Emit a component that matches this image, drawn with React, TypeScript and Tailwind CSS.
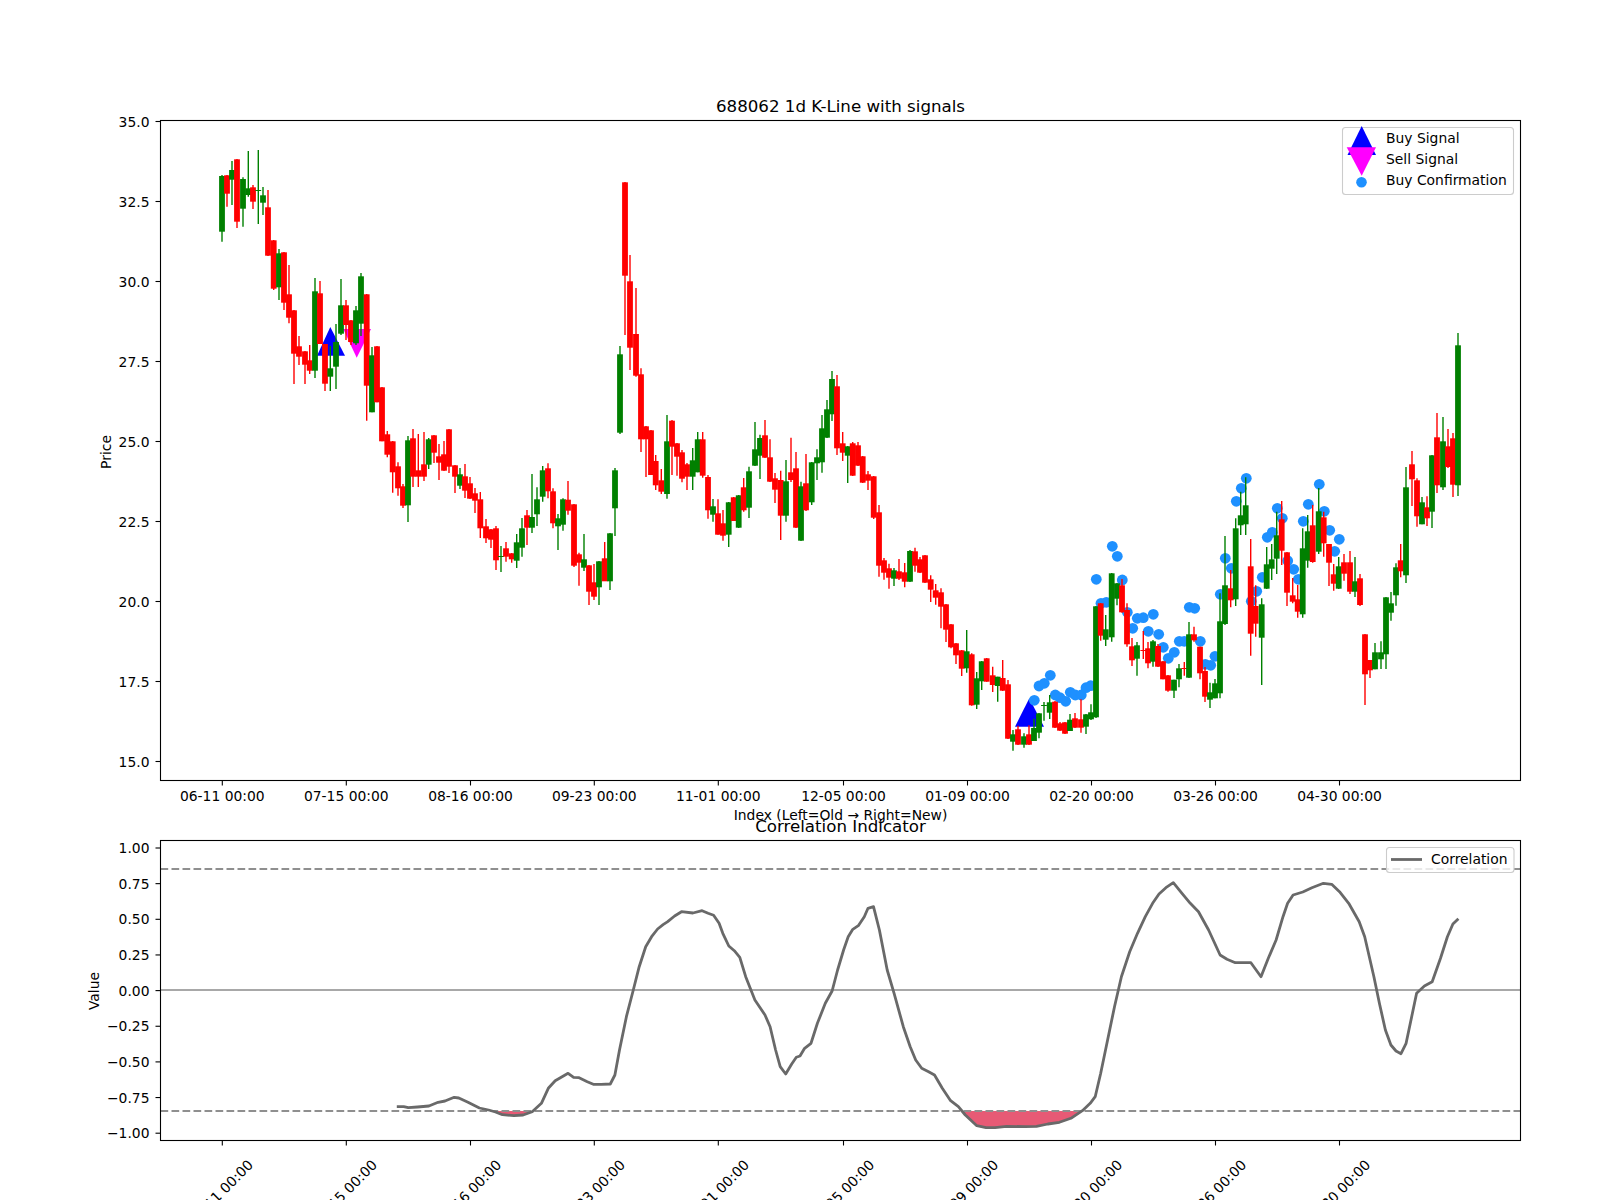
import React from 'react';

type Candle = [number, number, number, number, number, 'r' | 'g'];

// x, body top, body bottom, wick top, wick bottom (page pixels)
const CANDLES: Candle[] = [
  [222, 176, 231.7, 175, 241.7, 'g'], [227, 175.3, 193.7, 175, 206.7, 'r'], [232, 170, 179.7, 161, 205, 'g'],
  [237, 159.3, 221.7, 159, 228, 'r'], [243, 179, 208.7, 177.3, 226.7, 'g'], [248.3, 188.3, 195, 151, 196.7, 'g'],
  [253, 187.3, 201.7, 185, 209, 'r'], [258.3, 190, 191, 150, 224, 'g'], [263, 195.3, 202.7, 187, 215, 'g'],
  [268, 207.3, 255.7, 190, 256, 'r'], [273.7, 240.3, 288.7, 240, 290, 'r'], [279, 253.3, 287.3, 249, 300, 'g'],
  [284, 252.3, 302.7, 252, 310, 'r'], [289, 294.3, 317.7, 265, 323.3, 'r'], [294, 310.3, 353.7, 310, 384, 'r'],
  [299, 346.3, 356.7, 336, 365, 'r'], [305, 351.3, 364.7, 351, 384, 'r'], [309.7, 360.3, 370.7, 345, 374, 'r'],
  [315, 291.3, 370.7, 278, 378, 'g'], [320, 293.3, 344, 281, 344, 'r'], [325, 344, 383.7, 344, 391, 'r'],
  [330.3, 368.3, 376.7, 346, 391, 'g'], [336, 342, 366.7, 324, 389, 'g'], [341, 305.3, 333.7, 279, 335, 'g'],
  [346, 305.3, 325, 300, 340, 'r'], [351, 320.3, 342, 320, 345, 'r'], [356, 310.3, 343.3, 306, 345, 'g'],
  [361, 276.3, 323.7, 273, 336, 'g'], [366.7, 294.3, 385.7, 294, 420.7, 'r'], [372, 355.3, 412.3, 347, 412.3, 'g'],
  [377, 346.3, 402.3, 346, 402.3, 'r'], [382, 387.3, 441.3, 387, 441.3, 'r'],
  [387.3, 434.3, 454.7, 431, 457.3, 'r'], [392.7, 441.3, 472.3, 441, 492.7, 'r'], [398, 466.3, 488.3, 462.3, 495.7, 'r'],
  [403, 486.3, 505.7, 484, 508, 'r'], [408, 440.3, 505.3, 436, 522, 'g'], [413, 438.3, 476.7, 429, 487, 'r'],
  [418.3, 470.3, 476.7, 434, 487, 'r'], [424, 464.3, 476.7, 432, 481, 'r'], [428.7, 439.3, 464.7, 438, 469, 'g'],
  [434, 435.3, 452.7, 435, 463, 'r'], [439, 456.3, 462.7, 444, 480, 'r'], [444, 454.3, 470.7, 441, 471, 'r'],
  [449, 429.3, 466.7, 429, 473, 'r'], [455, 465.3, 476.7, 465, 493, 'r'], [460, 474.3, 485.7, 468, 489, 'g'],
  [465, 476.3, 490.7, 464, 498, 'r'], [470, 483.3, 498.7, 477, 499, 'r'], [475, 493.3, 500.7, 488, 513, 'r'],
  [480.3, 499.3, 528.3, 492, 538, 'r'], [486, 526.3, 538.3, 519, 543, 'r'], [491, 529.3, 539.7, 529, 548, 'r'],
  [496, 528.3, 560.3, 526, 570, 'r'], [501, 556, 557, 546, 572, 'g'], [506, 548.3, 556.7, 542, 561.7, 'r'],
  [511.7, 553.3, 559.3, 553, 562.7, 'r'], [516.7, 542.3, 560.7, 534, 568, 'g'], [522, 528.3, 547.7, 518, 556.7, 'g'],
  [527, 515.3, 527.7, 510, 545, 'r'], [532, 517, 527.7, 474, 533, 'g'], [537, 499.3, 514.3, 487.3, 526, 'g'],
  [542.7, 470.3, 496.7, 466, 501.7, 'g'], [548, 468.3, 491.3, 463.3, 498.3, 'r'], [553, 491.3, 523.3, 488.3, 528.3, 'r'],
  [558, 518.3, 526.3, 514, 550, 'g'], [563, 499.3, 524.7, 498.3, 530.7, 'g'], [568, 499.7, 510.7, 481, 514.7, 'r'],
  [574, 504.3, 565.7, 504, 567, 'r'], [579, 554.3, 562.7, 552.7, 585.7, 'r'], [584, 559.3, 567.7, 534, 571, 'g'],
  [589, 565.3, 591.7, 565, 605, 'r'], [594, 582.3, 596.7, 564, 600, 'r'], [599, 561.3, 587.3, 561, 605, 'g'],
  [604.7, 558.3, 581.3, 542, 581, 'r'], [610, 533.3, 581.3, 533, 590, 'g'], [615, 470.3, 508.3, 468, 536, 'g'],
  [620, 354.3, 432.7, 346, 434, 'g'], [625, 182.3, 275.7, 182, 335, 'r'], [630, 281.3, 347.7, 255, 370, 'r'],
  [636, 334, 375.7, 288, 376.7, 'r'], [641, 374.3, 439.3, 368.3, 452, 'r'], [646, 426.3, 439.3, 426, 477, 'r'],
  [651, 430.3, 475, 430, 475, 'r'], [655.7, 461, 485.3, 455, 490, 'r'], [661.3, 480.3, 491.7, 469, 494, 'r'],
  [667, 441.3, 494, 415, 498.7, 'g'], [672, 420.7, 446.7, 420, 475, 'r'], [677, 443.3, 456.7, 443, 475.7, 'r'],
  [682, 452.3, 478.7, 450, 482.3, 'r'], [687, 464.3, 476.7, 463, 490, 'r'], [692.7, 460.3, 476.7, 448, 490, 'g'],
  [697.7, 439.3, 472.3, 432, 472.3, 'g'], [702.7, 439.3, 475.7, 432, 477.7, 'r'], [708, 477, 510.3, 475, 518.7, 'r'],
  [713, 506.3, 514.7, 499, 521.7, 'g'], [718, 513.3, 534.7, 499.3, 534.7, 'r'], [723, 523.3, 535.7, 510, 540.7, 'r'],
  [728.7, 502.3, 534.7, 502, 547, 'g'], [733.7, 497.3, 521, 497, 521, 'r'], [738.7, 495.3, 527.7, 495, 528, 'g'],
  [743.7, 487.3, 510.3, 478, 511.7, 'r'], [749, 471.3, 507.7, 466.7, 518, 'g'], [755, 449.3, 465.7, 422, 466, 'g'],
  [760, 438, 455.7, 434.7, 479, 'g'], [765, 435.3, 457.7, 420, 458, 'r'], [770, 457.3, 481.7, 439.3, 482, 'r'],
  [775, 478.3, 489.7, 473, 503, 'r'], [780.7, 480, 515.7, 470.7, 540, 'r'], [786, 481.3, 515.7, 460, 521.7, 'g'],
  [791, 472.3, 480, 437.7, 482, 'r'], [796, 468.3, 527.7, 452, 528, 'r'], [801, 486.3, 540.7, 481.7, 541, 'g'],
  [806, 483.3, 510.3, 454, 511, 'r'], [811.7, 462.3, 502.3, 462, 505, 'g'], [817, 457.3, 463.3, 449.3, 480, 'g'],
  [822, 428.3, 462.3, 415, 472.7, 'g'], [827, 409.3, 437.7, 400, 438, 'g'], [832, 379, 414.3, 371, 421, 'g'],
  [837, 386.3, 448.3, 375, 455, 'r'], [842.7, 443.3, 452.7, 432, 461, 'r'], [847.7, 446.3, 455.7, 446, 483, 'g'],
  [852.7, 443.3, 475.7, 442, 476, 'r'], [858, 445.3, 465.7, 442, 466, 'r'], [862.7, 456.3, 482.7, 456, 483, 'r'],
  [868, 474.3, 480.7, 471, 490, 'r'], [873.7, 476.3, 517.7, 476, 519, 'r'], [879, 512.3, 565.7, 505, 576.7, 'r'],
  [884, 560.3, 572.7, 558, 579.7, 'r'], [889, 568.3, 577.7, 563.7, 588.7, 'r'], [894, 570.3, 578.7, 568, 586, 'g'],
  [899, 571.3, 578.7, 559, 580, 'r'], [904.7, 572.3, 581.7, 563, 587.3, 'r'], [910, 551, 581.7, 550, 582, 'g'],
  [915, 551.3, 565.7, 547.7, 571.7, 'r'], [920, 559.3, 572.7, 557, 573, 'r'], [925, 555.3, 582.7, 555, 583, 'r'],
  [930.7, 579.3, 589.7, 575.3, 602, 'r'], [935.7, 590.3, 597.7, 584, 604.7, 'r'], [941, 592.3, 606.7, 588.3, 628.3, 'r'],
  [946, 604.3, 629.7, 604, 642, 'r'], [951, 624.3, 647.3, 624, 648.3, 'r'], [956, 643.3, 655.3, 643, 664, 'r'],
  [961.7, 650.3, 668.7, 650, 676, 'r'], [966.7, 651.3, 668.3, 630, 672.7, 'g'], [971.7, 654.3, 705.3, 653.3, 705.7, 'r'],
  [976.7, 678.3, 704.7, 672, 709, 'g'], [981.7, 661.3, 681.3, 661, 690, 'g'], [986.7, 658.3, 681.7, 658, 681.7, 'r'],
  [992.7, 675.3, 685, 666.7, 692, 'r'], [997.7, 676.7, 686, 676.7, 701.7, 'g'], [1002.7, 678, 690.7, 660, 691, 'r'],
  [1008, 684.3, 738.7, 680, 739, 'r'], [1013, 734.3, 741.7, 730, 750.7, 'g'], [1018, 729.3, 744.7, 725.7, 745, 'r'],
  [1024, 736.3, 744.7, 733.3, 747.7, 'g'], [1029, 734.3, 744.7, 725.3, 745, 'r'], [1034, 728, 741, 718.7, 741, 'g'],
  [1039, 713.3, 732.7, 713, 738.3, 'g'], [1044, 705, 706, 702, 720.7, 'g'], [1049.7, 702.3, 712.7, 695, 719, 'g'],
  [1055, 701.7, 727.7, 701, 728, 'r'], [1060, 723.3, 730.7, 722, 731, 'r'], [1065, 722.3, 733.7, 722, 734, 'r'],
  [1070, 719.7, 731, 714, 731, 'g'], [1075, 718.3, 727.7, 713, 728, 'r'], [1081, 719.3, 727.7, 699.3, 732.7, 'r'],
  [1086, 714.3, 726.7, 714, 734, 'g'], [1091, 712.3, 719.3, 704.3, 720, 'g'], [1096, 606.3, 717.3, 606, 718, 'g'],
  [1100.7, 603.3, 635.7, 603, 640.7, 'r'], [1105.7, 629.3, 639.7, 615, 646, 'g'], [1111.7, 573.3, 637.3, 573, 641.7, 'g'],
  [1117, 583.3, 598.7, 583, 605.3, 'g'], [1122, 585.3, 612.3, 579, 612.7, 'r'], [1127, 610, 644.3, 603.3, 646.7, 'r'],
  [1132, 646.3, 660.3, 638, 666, 'r'], [1137, 645.3, 658.7, 642, 675.7, 'g'], [1143.3, 650, 651, 631, 659, 'r'],
  [1148, 648.3, 663.3, 642, 668.3, 'r'], [1153, 641.3, 661.7, 640, 666.7, 'g'], [1158, 646, 666.7, 644, 667, 'r'],
  [1163, 661.3, 679.3, 661, 679.3, 'r'], [1168, 675.3, 690.7, 675, 691.7, 'r'], [1174, 679.7, 690.7, 679.7, 698, 'g'],
  [1179, 668.3, 679.3, 664, 687.3, 'g'], [1184.3, 668, 669, 662, 675.7, 'r'], [1189, 634.3, 677.7, 622, 678, 'g'],
  [1194, 634.3, 640.3, 626.7, 641.7, 'r'], [1200, 646.7, 673.3, 646.7, 679.3, 'r'], [1205, 671, 696.7, 667, 702, 'r'],
  [1210, 692.3, 699.7, 682.7, 708, 'g'], [1215, 683.3, 698.3, 679, 698.3, 'g'], [1220, 621.3, 693.3, 593.3, 698.3, 'g'],
  [1225, 585.3, 624, 536, 625, 'g'], [1230.7, 588.3, 600.3, 570, 607.3, 'r'], [1235.7, 528.3, 599.3, 518.3, 606, 'g'],
  [1240.7, 515.3, 525.3, 491.7, 535, 'g'], [1245.7, 505.3, 524.3, 477.3, 535, 'g'], [1250.7, 566.3, 633.7, 539, 655.7, 'r'],
  [1255.7, 606, 623.7, 585.3, 636.7, 'r'], [1261.7, 604.3, 637.7, 598.3, 685, 'g'], [1266.7, 564.3, 588.7, 547, 589, 'g'],
  [1271.7, 559.3, 568.7, 544, 580, 'g'], [1276.7, 535.3, 558.7, 511.7, 574, 'g'], [1281.7, 519.3, 550.7, 501, 565, 'r'],
  [1287, 552.3, 592.7, 552, 606, 'r'], [1292.7, 595.3, 601.7, 578, 603.3, 'r'], [1297.7, 599.3, 611.7, 585, 617.7, 'r'],
  [1302.7, 548.3, 614.3, 528.3, 617.7, 'g'], [1307.7, 531.3, 560.7, 515, 567.7, 'g'], [1312.7, 525.3, 562, 505, 562.7, 'r'],
  [1318.7, 511.3, 551.7, 488, 554, 'g'], [1323.7, 517.3, 543.3, 511.7, 556.7, 'r'], [1329, 544, 562.7, 544, 586, 'r'],
  [1333.7, 574.3, 583.7, 564, 590.7, 'r'], [1338.7, 566.3, 588.7, 557, 589, 'g'], [1344, 562.3, 573.7, 554, 580.7, 'r'],
  [1350, 562.3, 591.7, 551, 594, 'r'], [1355, 581.3, 591.7, 557, 597, 'g'], [1360, 578.3, 605, 574, 606, 'r'],
  [1365, 634.3, 674.3, 634, 705, 'r'], [1370, 660, 670.3, 660, 678, 'r'], [1375, 652.3, 669.3, 643, 669.3, 'g'],
  [1381, 652.3, 659.3, 641.3, 669, 'g'], [1386, 597.3, 654.3, 597, 669, 'g'], [1391, 603.3, 612.7, 592, 620.7, 'g'],
  [1396, 567.3, 595.3, 563.3, 605.7, 'g'], [1400.7, 560.3, 571.3, 544, 577.3, 'r'], [1406, 487.3, 575.3, 467, 583, 'g'],
  [1412, 464.3, 479.3, 451, 506, 'r'], [1417, 480.3, 516.3, 478.3, 526.7, 'r'], [1422, 502.3, 524.3, 497, 524.3, 'g'],
  [1427, 507.3, 518.3, 496.3, 526, 'r'], [1432, 455.3, 511.7, 455, 528, 'g'], [1437, 437.3, 485.3, 413, 493, 'r'],
  [1443, 441.3, 487.3, 417, 490, 'g'], [1448, 446.3, 467, 429, 468, 'r'], [1453, 438.3, 484.7, 433, 497, 'r'],
  [1458, 345.3, 485.3, 333, 496, 'g'],
];

const CONFIRMATIONS = [
  [1034.3, 700.3], [1039, 686], [1044.3, 683.3], [1050.3, 675.3], [1055.3, 695], [1060, 697.7], [1065.7, 701.3],
  [1070.3, 692.3], [1075.3, 695], [1081.3, 695], [1086, 687.7], [1090.7, 685.7], [1096.3, 579.3], [1101, 603.3],
  [1106.3, 602.3], [1112.3, 546.3], [1117.3, 556.3], [1122.3, 580], [1127.3, 612.3], [1132.7, 628.3], [1137.3, 618.3],
  [1143.3, 617.7], [1148.3, 631.3], [1153.3, 614.3], [1158.7, 634.3], [1163.3, 647.3], [1168.3, 658.3], [1174.3, 652.3],
  [1179.3, 641.3], [1184.3, 641.3], [1189.3, 607.3], [1194.7, 608.3], [1200.3, 641.3], [1205.3, 664.3], [1210.7, 665.3],
  [1215, 656.3], [1220.3, 594.3], [1225.3, 558.3], [1231.3, 568.3], [1236.3, 501.3], [1241.3, 488.3], [1246.3, 478.3],
  [1251.3, 601.3], [1256.7, 591.3], [1262.3, 577.3], [1267.3, 537.3], [1272.3, 532.3], [1277.3, 508.3], [1282.3, 518.3],
  [1287.7, 560.7], [1293.7, 569.3], [1298.3, 579.3], [1303.3, 521.3], [1308.3, 504.3], [1319.3, 484.3], [1324.3, 511.3],
  [1329.7, 530.3], [1334.7, 551.3], [1339.3, 539.3],
];

// correlation line, traced in two runs
const LEFT_RUN = [
  [690, 1040], [705, 1040], [715, 1043], [735, 1041], [760, 1038], [780, 1027], [795, 1023], [815, 1012], [825, 1014],
  [845, 1027], [870, 1044], [890, 1050], [905, 1056], [920, 1064], [945, 1067], [965, 1065], [985, 1055], [1005, 1030],
  [1020, 985], [1035, 962], [1050, 950], [1063, 940], [1075, 952], [1087, 953], [1105, 965], [1118, 973], [1135, 973],
  [1155, 972], [1165, 945], [1175, 870], [1190, 770], [1205, 690], [1218, 620], [1232, 560], [1245, 530], [1258, 507],
  [1270, 494], [1280, 485], [1295, 468], [1310, 455], [1335, 459], [1355, 452], [1368, 460], [1380, 466], [1392, 490],
  [1400, 520], [1413, 558], [1425, 572], [1437, 592], [1450, 650], [1470, 720], [1492, 765], [1503, 800], [1515, 870],
  [1525, 920], [1537, 942], [1550, 912], [1560, 892],
];
const RIGHT_RUN = [
  [0, 888], [10, 865], [24, 850], [38, 790], [55, 730], [70, 693], [82, 630], [95, 570], [105, 530], [115, 508],
  [127, 497], [140, 470], [148, 445], [160, 440], [173, 510], [190, 630], [205, 700], [225, 800], [240, 860], [252, 900],
  [265, 925], [280, 935], [293, 945], [310, 985], [328, 1022], [345, 1040], [360, 1065], [385, 1097], [405, 1103],
  [425, 1103], [450, 1099], [490, 1100], [515, 1099], [540, 1092], [565, 1087], [590, 1075], [615, 1052], [632, 1030],
  [643, 1010], [655, 940], [670, 840], [685, 740], [700, 650], [718, 575], [735, 520], [752, 470], [768, 430], [782, 402],
  [797, 383], [813, 368], [832, 400], [850, 430], [868, 455], [890, 510], [915, 585], [930, 598], [948, 608], [982, 608],
  [1004, 650], [1020, 595], [1037, 540], [1052, 470], [1062, 430], [1074, 405], [1095, 396], [1115, 383], [1140, 370],
  [1158, 373], [1175, 395], [1195, 430], [1218, 485], [1230, 530], [1250, 650], [1262, 730], [1275, 810], [1287, 855],
  [1298, 873], [1309, 881], [1320, 850], [1343, 700], [1360, 678], [1377, 665], [1395, 595], [1410, 530], [1422, 492],
  [1434, 476],
];
const CORRELATION = [
  ...LEFT_RUN.map(([a, b]) => [80 + a / 2.178, 760 + b / 3]),
  ...RIGHT_RUN.map(([a, b]) => [800 + a / 2.178, 760 + b / 3]),
];

const X_TICKS = [222.3, 346.3, 470.5, 594.3, 718.3, 843.5, 967.5, 1091.5, 1215.5, 1339.5];
const X_LABELS = [
  '06-11 00:00', '07-15 00:00', '08-16 00:00', '09-23 00:00', '11-01 00:00',
  '12-05 00:00', '01-09 00:00', '02-20 00:00', '03-26 00:00', '04-30 00:00',
];
const PRICE_TICKS = ['35.0', '32.5', '30.0', '27.5', '25.0', '22.5', '20.0', '17.5', '15.0'];
const VALUE_TICKS = ['1.00', '0.75', '0.50', '0.25', '0.00', '−0.25', '−0.50', '−0.75', '−1.00'];

const CUT_Y = 1111;
const toPoints = (pts: number[][]) => pts.map(([x, y]) => `${x.toFixed(1)},${y.toFixed(1)}`).join(' ');

const Spines = ({ top, bottom }: { top: number; bottom: number }) => (
  <rect x={160.5} y={top} width={1360} height={bottom - top} fill="none" stroke="#000" strokeWidth={1.1} />
);

const Ticks = ({ bottom }: { bottom: number }) => (
  <g stroke="#000" strokeWidth={1.1}>
    {X_TICKS.map((x) => (
      <line key={x} x1={x} x2={x} y1={bottom} y2={bottom + 5} />
    ))}
  </g>
);

const YAxis = ({ labels, start, step }: { labels: string[]; start: number; step: number }) => (
  <g className="text-[13.89px]" fill="#000">
    {labels.map((label, i) => {
      const y = start + step * i;
      return (
        <g key={label}>
          <line x1={155.5} x2={160.5} y1={y} y2={y} stroke="#000" strokeWidth={1.1} />
          <text x={149.5} y={y + 5} textAnchor="end">
            {label}
          </text>
        </g>
      );
    })}
  </g>
);

const PriceChart = () => (
  <svg className="block h-[830px] w-[1600px] shrink-0 overflow-visible" viewBox="0 0 1600 830">
    <text x={840.5} y={112} textAnchor="middle" className="text-[16.67px]">
      688062 1d K-Line with signals
    </text>

    <polygon points="330.3,327 317,355.7 345,355.7" fill="#0000ff" />
    <polygon points="343.3,329 371,329 356.7,357.7" fill="#ff00ff" />
    <polygon points="1029.3,698.3 1015,726.7 1044,726.7" fill="#0000ff" />
    {CONFIRMATIONS.map(([x, y]) => (
      <circle key={`${x}-${y}`} cx={x} cy={y} r={5.4} fill="#1e90ff" />
    ))}

    {CANDLES.map(([x, top, bot, wickTop, wickBot, side]) => {
      const color = side === 'r' ? '#ff0000' : '#008000';
      return (
        <g key={x}>
          <line x1={x} x2={x} y1={wickTop} y2={wickBot} stroke={color} strokeWidth={1.4} />
          <rect x={x - 2.9} y={top} width={5.8} height={bot - top} fill={color} />
        </g>
      );
    })}

    <rect x={1342.5} y={127.5} width={171} height={67} rx={3} fill="#fff" fillOpacity={0.8} stroke="#ccc" strokeWidth={1.1} />
    <polygon points="1361.7,126 1347.5,155 1376,155" fill="#0000ff" />
    <polygon points="1346.7,147.3 1376,147.3 1361.7,175.7" fill="#ff00ff" />
    <circle cx={1361.5} cy={182.3} r={5.3} fill="#1e90ff" />
    <g className="text-[13.89px]">
      <text x={1386} y={143}>Buy Signal</text>
      <text x={1386} y={164}>Sell Signal</text>
      <text x={1386} y={185}>Buy Confirmation</text>
    </g>

    <Spines top={120.5} bottom={780.5} />
    <Ticks bottom={780.5} />
    <YAxis labels={PRICE_TICKS} start={121.5} step={80} />
    <g className="text-[13.89px]">
      {X_TICKS.map((x, i) => (
        <text key={x} x={x} y={801} textAnchor="middle">
          {X_LABELS[i]}
        </text>
      ))}
      <text x={840.5} y={820} textAnchor="middle">
        Index (Left=Old → Right=New)
      </text>
      <text transform="translate(111 452) rotate(-90)" textAnchor="middle">
        Price
      </text>
    </g>
  </svg>
);

const CorrelationChart = () => (
  <svg className="block h-[370px] w-[1600px] shrink-0 overflow-visible" viewBox="0 830 1600 370">
    <defs>
      <clipPath id="below-band">
        <rect x={160} y={CUT_Y} width={1360} height={30} />
      </clipPath>
    </defs>
    <text x={840.5} y={831.5} textAnchor="middle" className="text-[16.67px]">
      Correlation Indicator
    </text>

    <polygon
      points={toPoints([...CORRELATION, [1400, CUT_Y], [397, CUT_Y]])}
      fill="#e75a75"
      clipPath="url(#below-band)"
    />
    <line x1={160.5} x2={1520.5} y1={990} y2={990} stroke="#a8a8a8" strokeWidth={2.1} />
    <g stroke="#8f8f8f" strokeWidth={2.1} strokeDasharray="7.7 3.3">
      <line x1={160.5} x2={1520.5} y1={869} y2={869} />
      <line x1={160.5} x2={1520.5} y1={CUT_Y} y2={CUT_Y} />
    </g>
    <polyline points={toPoints(CORRELATION)} fill="none" stroke="#696969" strokeWidth={2.8} strokeLinejoin="round" />

    <rect x={1386.5} y={847.5} width={127.5} height={25} rx={3} fill="#fff" fillOpacity={0.8} stroke="#ccc" strokeWidth={1.1} />
    <line x1={1391} x2={1422} y1={859.5} y2={859.5} stroke="#696969" strokeWidth={2.8} />
    <text x={1431} y={864} className="text-[13.89px]">
      Correlation
    </text>

    <Spines top={840.5} bottom={1140.5} />
    <Ticks bottom={1140.5} />
    <YAxis labels={VALUE_TICKS} start={848} step={35.65} />
    <g className="text-[13.89px]">
      {X_TICKS.map((x, i) => (
        <text key={x} transform={`translate(${x - 1} 1193) rotate(-45)`} textAnchor="middle" dominantBaseline="middle">
          {X_LABELS[i]}
        </text>
      ))}
      <text transform="translate(99 991) rotate(-90)" textAnchor="middle">
        Value
      </text>
    </g>
  </svg>
);

export default function App() {
  return (
    <div className="flex h-[1200px] w-[1600px] flex-col overflow-hidden bg-white font-['DejaVu_Sans',sans-serif] text-black">
      <PriceChart />
      <CorrelationChart />
    </div>
  );
}
